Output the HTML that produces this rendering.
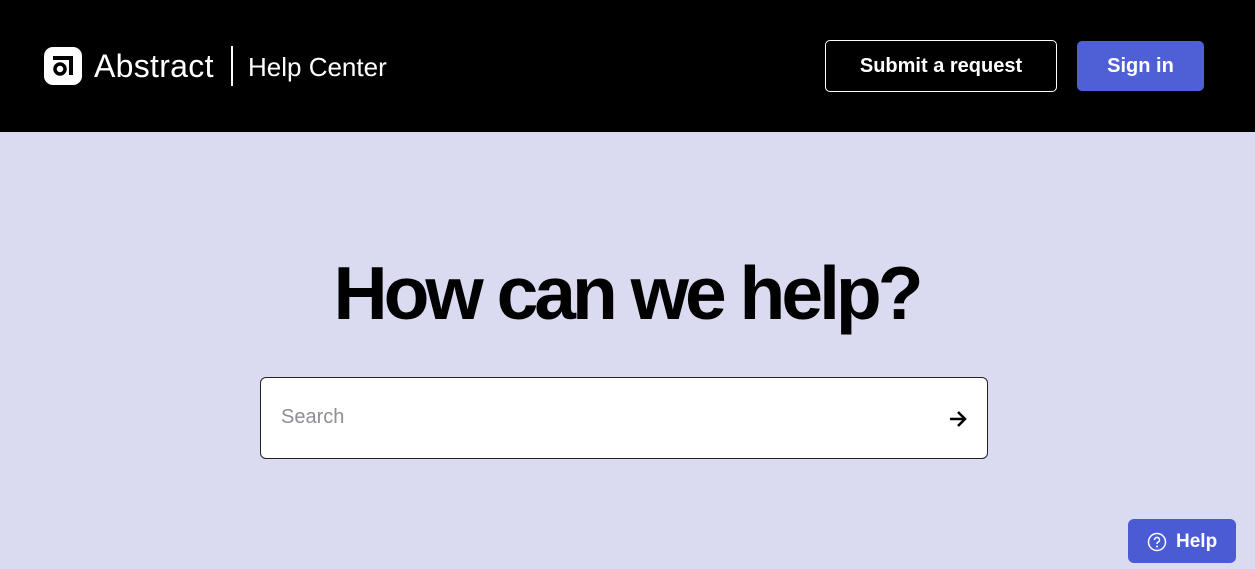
<!DOCTYPE html>
<html><head><meta charset="utf-8"><style>
*{margin:0;padding:0;box-sizing:border-box}
body{width:1255px;height:569px;overflow:hidden;background:#dadaf0;font-family:"Liberation Sans",sans-serif;position:relative}
.hdr{position:absolute;left:0;top:0;width:1255px;height:132px;background:#000}
.logo{position:absolute;left:44px;top:47px;width:38px;height:38px;background:#fff;border-radius:9px}
.brand{position:absolute;left:94px;top:48px;color:#fff;font-size:32px;letter-spacing:0.3px}
.sep{position:absolute;left:231px;top:46px;width:2px;height:40px;background:#fff}
.hc{position:absolute;left:248px;top:52px;color:#fff;font-size:26px}
.sub{position:absolute;left:825px;top:40px;width:232px;height:52px;border:1px solid #fff;border-radius:5px;color:#fff;font-weight:bold;font-size:20px;text-align:center;line-height:50px}
.sign{position:absolute;left:1077px;top:41px;width:127px;height:50px;background:#4f5fd5;border-radius:5px;color:#fff;font-weight:bold;font-size:20px;text-align:center;line-height:50px}
h1{position:absolute;left:0;width:1255px;top:250px;text-align:center;font-size:75px;font-weight:bold;letter-spacing:-4px;color:#000;padding-right:2px}
.search{position:absolute;left:260px;top:377px;width:728px;height:82px;background:#fff;border:1px solid #222;border-radius:6px}
.search span{position:absolute;left:20px;top:28px;color:#8d8d99;font-size:20px}
.help{position:absolute;left:1128px;top:519px;width:108px;height:44px;background:#4a5bd4;border-radius:6px;color:#fff;font-weight:bold;font-size:19px;line-height:46px}
</style></head><body>
<div class="hdr">
<div class="logo"><svg width="38" height="38" viewBox="0 0 38 38"><path d="M9 11H27V28" fill="none" stroke="#000" stroke-width="4"/><circle cx="16" cy="22" r="5" fill="none" stroke="#000" stroke-width="3.5"/></svg></div>
<div class="brand">Abstract</div><div class="sep"></div><div class="hc">Help Center</div>
<div class="sub">Submit a request</div><div class="sign">Sign in</div>
</div>
<h1>How can we help?</h1>
<div class="search"><span>Search</span>
<svg style="position:absolute;left:686px;top:30px" width="22" height="22" viewBox="0 0 22 22"><path d="M3 11H18M11 4L18 11L11 18" fill="none" stroke="#000" stroke-width="2.5"/></svg></div>
<div class="help"><svg style="position:absolute;left:19px;top:13px" width="20" height="20" viewBox="0 0 20 20"><circle cx="10" cy="10" r="8.5" fill="none" stroke="#fff" stroke-width="1.5"/><path d="M7.5 8a2.5 2.5 0 1 1 3.5 2.2c-.8.4-1 .9-1 1.8" fill="none" stroke="#fff" stroke-width="1.5"/><circle cx="10" cy="14.5" r="1" fill="#fff"/></svg><span style="position:absolute;left:48px">Help</span></div>
</body></html>
